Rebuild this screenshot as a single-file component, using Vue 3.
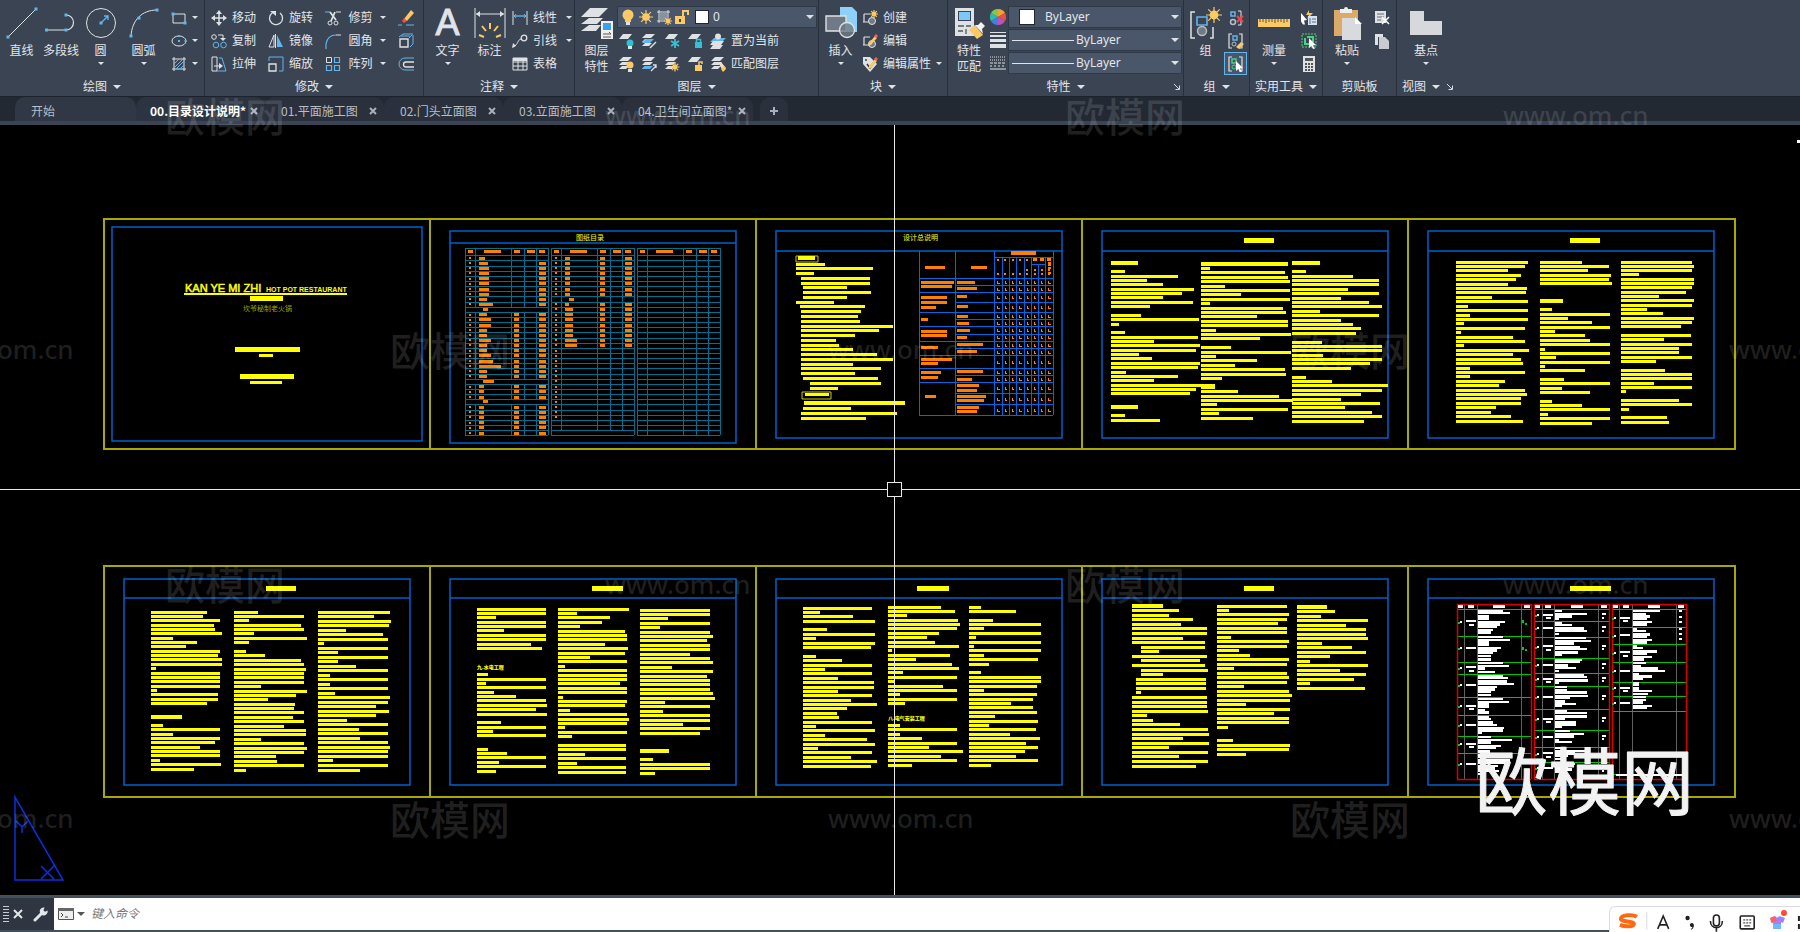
<template>
  <div class="app">
    <header class="ribbon">
      <section v-for="panel in panels" :key="panel.id" class="panel" :class="'panel-' + panel.id">
        <div class="panel-body">
          <button
            v-for="tool in panel.big"
            :key="tool.label"
            class="big"
            :class="{ wide: tool.label.length === 3 }"
          >
            <span v-if="tool.icon === 'A'" class="letter">A</span>
            <svg v-else class="icon-big" viewBox="0 0 32 32" v-html="icons[tool.icon]"></svg>
            <span class="big-label">{{ tool.label }}</span>
            <i v-if="tool.arrow" class="caret small"></i>
          </button>

          <div v-if="panel.id === 'layer'" class="layers">
            <div class="layer-box">
              <svg v-for="n in ['bulb', 'sun', 'vpfreeze', 'unlock']" :key="n" class="icon" viewBox="0 0 16 16" v-html="icons[n]"></svg>
              <i class="swatch"></i>
              <select class="pick" aria-label="图层"><option>0</option></select>
              <i class="caret"></i>
            </div>
            <div v-for="(row, r) in layerRows" :key="r" class="layer-row">
              <button v-for="n in row.icons" :key="n" class="tool" :aria-label="n">
                <svg class="icon" viewBox="0 0 16 16" v-html="icons[n]"></svg>
              </button>
              <button class="tool">
                <svg class="icon" viewBox="0 0 16 16" v-html="icons[row.icon]"></svg>{{ row.label }}
              </button>
            </div>
          </div>

          <div v-if="panel.id === 'props'" class="props">
            <div v-for="p in props" :key="p.icon" class="prop-row">
              <svg class="icon" viewBox="0 0 16 16" v-html="icons[p.icon]"></svg>
              <div class="prop-box">
                <i :class="p.line ? 'line' : 'swatch'"></i>
                <select class="pick" :aria-label="p.label"><option>ByLayer</option></select>
                <i class="caret"></i>
              </div>
            </div>
          </div>

          <div v-for="(col, c) in panel.cols" :key="c" class="col">
            <button
              v-for="tool in col"
              :key="tool.icon"
              class="tool"
              :class="{ on: tool.on }"
              :aria-label="tool.label || tool.icon"
            >
              <svg class="icon" viewBox="0 0 16 16" v-html="icons[tool.icon]"></svg>
              <span v-if="tool.label">{{ tool.label }}</span>
              <i v-if="tool.arrow" class="caret small"></i>
            </button>
          </div>
        </div>
        <div class="panel-title">
          {{ panel.title }}
          <i v-if="panel.id !== 'clip'" class="caret"></i>
          <svg v-if="panel.id === 'props' || panel.id === 'view'" class="launch" viewBox="0 0 8 8">
            <path d="M1 1l5 5M6.500 2.500v4h-4" fill="none" stroke="#d6dae0" />
          </svg>
        </div>
      </section>
    </header>

    <nav class="tabs">
      <button v-for="tab in tabs" :key="tab" class="tab" :class="{ home: tab === '开始', active: tab === activeTab }" @click="activeTab = tab">
        <span>{{ tab }}</span>
        <svg v-if="tab !== '开始'" class="cross" viewBox="0 0 8 8"><path d="M1 1l6 6M7 1l-6 6" /></svg>
      </button>
      <button class="tab add" aria-label="新建">
        <svg class="cross" viewBox="0 0 8 8"><path d="M4 0v8M0 4h8" /></svg>
      </button>
    </nav>

    <main class="model">
      <svg class="drawing" viewBox="0 125 1800 770" preserveAspectRatio="xMidYMid slice">
        <g fill="none" stroke="#a8a800" stroke-width="2">
          <path d="M104 219H1735V449H104zM430 219V449M756 219V449M1082 219V449M1408 219V449" />
          <path d="M104 566H1735V797H104zM430 566V797M756 566V797M1082 566V797M1408 566V797" />
        </g>
        <g fill="none" stroke="#0062cc" stroke-width="1.500">
          <path d="M112 227H422V441H112zM450 231H736V443H450zM450 243H736" />
          <path v-for="x in [776, 1102, 1428]" :key="x" :d="`M${x} 231h286v207h-286zM${x} 251h286`" />
          <path v-for="x in [124, 450, 776, 1102, 1428]" :key="'b' + x" :d="`M${x} 579h286v206h-286zM${x} 598h286`" />
        </g>

        <!-- 封面 -->
        <g class="yellow">
          <text x="185" y="292" class="cover-a">KAN YE MI ZHI</text>
          <text x="266" y="292" class="cover-b">HOT POT RESTAURANT</text>
          <text x="243" y="311" class="cover-c">坎爷秘制老火锅</text>
          <rect v-for="(b, i) in coverBars" :key="i" :x="b[0]" :y="b[1]" :width="b[2]" :height="b[3]" />
        </g>

        <!-- 图纸目录 -->
        <path :d="catalog.grid" fill="none" stroke="#007092" />
        <path :d="catalog.marks" fill="#ff8000" shape-rendering="crispEdges" />

        <!-- 设计总说明 -->
        <path :d="notes.grid" fill="none" stroke="#0068e0" />
        <path :d="notes.marks" fill="#ff8000" shape-rendering="crispEdges" />
        <path d="M796 256h22v6h-22zM802 392h29v7h-29z" fill="none" stroke="#c8c800" />

        <g class="yellow">
          <text x="576" y="240" class="sheet-title">图纸目录</text>
          <text x="903" y="240" class="sheet-title">设计总说明</text>
          <text x="477" y="669" class="chapter">九.水电工程</text>
          <text x="888" y="720" class="chapter">八.电气安装工程</text>
          <path :d="textLines" shape-rendering="crispEdges" />
        </g>

        <!-- 材料表 -->
        <path :d="schedule.grey" fill="none" stroke="#606060" />
        <path :d="schedule.green" fill="none" stroke="#00c400" />
        <path :d="schedule.red" fill="none" stroke="#d80000" stroke-width="1.500" />
        <path :d="schedule.white" fill="#fff" shape-rendering="crispEdges" />
        <path :d="schedule.dots" fill="#00c820" />

        <g fill="none" stroke="#0a30e0" stroke-width="1.500">
          <path d="M15 797V880H63zM16 821l6 6 6-6M22 827v6M41 866l13 13M54 866l-13 13" />
        </g>
        <path d="M894 125V482M894 496V895M0 489H887M901 489H1800M887 482h14v14h-14z" fill="none" stroke="#e8e8e8" shape-rendering="crispEdges" />
        <rect x="1797" y="140" width="3" height="3" fill="#fff" />
      </svg>
    </main>

    <footer class="command">
      <div class="command-side">
        <i class="grip"></i>
        <button aria-label="关闭"><svg class="side-x" viewBox="0 0 10 10"><path d="M1 1l8 8M9 1l-8 8" stroke="#e4e7ea" stroke-width="2" /></svg></button>
        <button aria-label="自定义">
          <svg class="wrench" viewBox="0 0 16 16">
            <path d="M2 14l6-6" stroke="#e4e7ea" stroke-width="3" stroke-linecap="round" />
            <path d="M14.600 4.500l-2.600 1.300-1.600-1.600L11.600 1.500A4 4 0 1 0 14.600 4.500z" fill="#e4e7ea" />
          </svg>
        </button>
      </div>
      <label class="prompt">
        <svg class="term" viewBox="0 0 16 12">
          <path d="M.5.5h15v11h-15z" fill="#eee" stroke="#555" /><path d="M0 0h16v3H0z" fill="#666" />
          <path d="M3 5l2 2-2 2M7 9h3" fill="none" stroke="#444" />
        </svg>
        <i class="caret dark"></i>
        <input type="text" placeholder="键入命令" aria-label="键入命令" />
      </label>
    </footer>

    <svg class="watermark" viewBox="0 0 1800 932" preserveAspectRatio="xMidYMid slice" aria-hidden="true">
      <text v-for="(m, i) in marks" :key="i" :x="m[0]" :y="m[1]" :class="m[2] ? 'mark-url' : 'mark-name'">{{ m[2] ? 'www.om.cn' : '欧模网' }}</text>
      <text x="1475" y="809" class="mark-big">欧模网</text>
    </svg>

    <div class="ime">
      <svg viewBox="0 0 191 25">
        <path d="M27 10c-4-3-16-2-16 2 0 3 13 2 13 5 0 3-9 3-14 1" fill="none" stroke="#ff6a10" stroke-width="4" />
        <path d="M37 5v18" stroke="#ddd" />
        <path d="M48 22l5.500-13 5.500 13M50 18h7" fill="none" stroke="#222" stroke-width="1.600" />
        <circle cx="78" cy="11" r="2.200" fill="#222" /><path d="M84 17a2 2 0 1 0-1 3l-2 3c3-1 4-4 3-6z" fill="#222" />
        <rect x="104" y="8" width="6" height="11" rx="3" fill="none" stroke="#222" stroke-width="1.600" />
        <path d="M101 14c0 9 12 9 12 0M107 21v4" fill="none" stroke="#222" stroke-width="1.600" />
        <rect x="131" y="9" width="14" height="13" rx="1" fill="none" stroke="#222" stroke-width="1.600" />
        <path d="M134 13h8M134 16h8" stroke="#222" stroke-dasharray="2 1" /><path d="M135 19h6" stroke="#222" />
        <path d="M161 11l5-2c1 2 3 2 4 0l6 2-2 5-2-1v7h-8v-7l-2 1z" fill="#a080ff" /><path d="M161 11l5-2 2 5-5 2z" fill="#ff6060" />
        <path d="M164 17h8v5h-8z" fill="#70b8ff" /><circle cx="175" cy="6" r="3" fill="#ff4a30" />
        <path d="M189 9h2v5h-2zM189 17h2v5h-2z" fill="#222" />
      </svg>
    </div>
  </div>
</template>

<script setup>
import { ref } from 'vue'

const tabs = ['开始', '00.目录设计说明*', '01.平面施工图', '02.门头立面图', '03.立面施工图', '04.卫生间立面图*']
const activeTab = ref('00.目录设计说明*')

const panels = [
  {
    id: 'draw', title: '绘图',
    big: [
      { label: '直线', icon: 'line' },
      { label: '多段线', icon: 'pline' },
      { label: '圆', icon: 'circle', arrow: true },
      { label: '圆弧', icon: 'arc', arrow: true }
    ],
    cols: [[{ icon: 'rect', arrow: true }, { icon: 'ellipse', arrow: true }, { icon: 'hatch', arrow: true }]]
  },
  {
    id: 'modify', title: '修改',
    cols: [
      [{ icon: 'move', label: '移动' }, { icon: 'copy', label: '复制' }, { icon: 'stretch', label: '拉伸' }],
      [{ icon: 'rotate', label: '旋转' }, { icon: 'mirror', label: '镜像' }, { icon: 'scale', label: '缩放' }],
      [{ icon: 'trim', label: '修剪', arrow: true }, { icon: 'fillet', label: '圆角', arrow: true }, { icon: 'array', label: '阵列', arrow: true }],
      [{ icon: 'erase' }, { icon: 'explode' }, { icon: 'offset' }]
    ]
  },
  {
    id: 'note', title: '注释',
    big: [{ label: '文字', icon: 'A', arrow: true }, { label: '标注', icon: 'dim' }],
    cols: [[{ icon: 'linear', label: '线性', arrow: true }, { icon: 'leader', label: '引线', arrow: true }, { icon: 'table', label: '表格' }]]
  },
  { id: 'layer', title: '图层', big: [{ label: '图层 特性', icon: 'layerprops' }] },
  {
    id: 'block', title: '块',
    big: [{ label: '插入', icon: 'insert', arrow: true }],
    cols: [[{ icon: 'create', label: '创建' }, { icon: 'edit', label: '编辑' }, { icon: 'attr', label: '编辑属性', arrow: true }]]
  },
  { id: 'props', title: '特性', big: [{ label: '特性 匹配', icon: 'match' }] },
  {
    id: 'group', title: '组',
    big: [{ label: '组', icon: 'group' }],
    cols: [[{ icon: 'ungroup' }, { icon: 'groupedit' }, { icon: 'grouppick', on: true }]]
  },
  {
    id: 'util', title: '实用工具',
    big: [{ label: '测量', icon: 'ruler', arrow: true }],
    cols: [[{ icon: 'quick' }, { icon: 'selectall' }, { icon: 'calc' }]]
  },
  {
    id: 'clip', title: '剪贴板',
    big: [{ label: '粘贴', icon: 'paste', arrow: true }],
    cols: [[{ icon: 'cut' }, { icon: 'pages' }]]
  },
  { id: 'view', title: '视图', big: [{ label: '基点', icon: 'base', arrow: true }] }
]

const layerRows = [
  { icons: ['lyoff', 'lyiso', 'lyfreeze', 'lylock'], icon: 'lycurrent', label: '置为当前' },
  { icons: ['lyon', 'lyuniso', 'lythaw', 'lyunlock'], icon: 'lymatch', label: '匹配图层' }
]

const props = [
  { icon: 'wheel', label: '颜色' },
  { icon: 'weight', label: '线宽', line: true },
  { icon: 'ltype', label: '线型', line: true }
]

const W = '#dfe2e5'
const B = '#62b5ea'
const Y = '#fbc965'
const G = '#4fd080'
const stroke = (d, c = W, w = 1) => `<path d="${d}" fill="none" stroke="${c}" stroke-width="${w}"/>`
const fill = (d, c = W) => `<path d="${d}" fill="${c}"/>`
const dots = (pts, s = 3) => pts.map(([x, y]) => `<rect x="${x - s / 2}" y="${y - s / 2}" width="${s}" height="${s}" fill="${B}"/>`).join('')
const sheets = fill('M5 1h9l-4 4H1z') + fill('M4 6h8l-3 3H1z') + fill('M4 10h7l-3 3H1z')
const oneSheet = fill('M5 1h9l-4 5H1z')
const padlock = (c, open) => fill('M8 9h7v6H8z', c) + stroke(open ? 'M12 9V6h3v2' : 'M9.500 9V6.500h4V9', c, 1.5)
const sunray = (x, y, r) => {
  let d = ''
  for (let i = 0; i < 8; i++) {
    const a = (i * Math.PI) / 4
    d += `M${x} ${y}L${(x + r * Math.cos(a)).toFixed(1)} ${(y + r * Math.sin(a)).toFixed(1)}`
  }
  return stroke(d, Y, 1.2) + `<circle cx="${x}" cy="${y}" r="${r * 0.55}" fill="${Y}"/>`
}
const pencil = fill('M7 10l6-7 2 2-6 7-3 1z', Y) + fill('M12 3l2-2 2 2-2 2z', '#f06060')
const blockBase = stroke('M2 4h6M2 4v8M1 12h6', W, 1.2) + '<circle cx="10" cy="11" r="3.500" fill="#707a86" stroke="#dfe2e5"/>'
const bracket = stroke('M4 1H1v14h3M11 1h3v14h-3', W, 1.2)
const cursor = fill('M8 5l7 7-3 .5 2 3-2 .5-1.500-3L8 15z', '#fff')

const icons = {
  line: stroke('M2 30L30 2') + dots([[2, 30], [30, 2]]),
  pline: stroke('M1 23h20a7 7 0 0 0 0-15', W, 1.2) + dots([[1.5, 23], [21, 23], [21, 8]]),
  circle: '<circle cx="16" cy="16" r="14.500" fill="none" stroke="#dfe2e5"/>' + stroke('M16 16l7-7M19 9h4v4', B, 1.3) + dots([[16, 16]]),
  arc: stroke('M3 29C4 13 14 3 29 3') + dots([[3, 29], [11, 11], [29, 3]]),
  rect: stroke('M2 4h12v9H2z') + dots([[2, 4], [14, 13]]),
  ellipse: '<ellipse cx="8" cy="8" rx="7" ry="5" fill="none" stroke="#dfe2e5"/>' + dots([[8, 8], [8, 3], [14.500, 8]], 2),
  hatch: stroke('M1 3h14M1 13h14M3 1v14M13 1v14') + stroke('M3 8l5-5M3 12l9-9M5 13l8-8M9 13l4-4', B),
  move: stroke('M8 2v12M2 8h12', W, 1.5) + fill('M8 0l3 4H5zM8 16l3-4H5zM0 8l4-3v6zM16 8l-4-3v6z'),
  copy: '<circle cx="3" cy="4" r="2.300" fill="none" stroke="#dfe2e5"/><circle cx="5" cy="12" r="2.800" fill="none" stroke="#62b5ea"/><circle cx="12.500" cy="12" r="2.800" fill="none" stroke="#62b5ea"/>' + stroke('M7 2h5v4') + fill('M9 5h6l-3 3z'),
  stretch: stroke('M6 1H1v14h5V1M3 10h7') + fill('M8 7l4 3-4 3z') + stroke('M8 2l3 0 4 13H6', B),
  rotate: stroke('M6 2a6.500 6.500 0 1 0 6 1', W, 1.3) + fill('M2 1h6v5z'),
  mirror: stroke('M6 2v12H1z') + fill('M9 2v12h6z', B) + stroke('M7.500 1v14', W),
  scale: stroke('M1 8h7v7H1z', W, 1.3) + stroke('M1 5V1h14v14h-4', B),
  trim: stroke('M0 2h5', B) + stroke('M11 2h5', W) + stroke('M5 2l6 8M10 2l-4 9', W, 1.8) + '<circle cx="5" cy="13" r="2" fill="none" stroke="#dfe2e5"/><circle cx="11" cy="13" r="2" fill="none" stroke="#dfe2e5"/>',
  fillet: stroke('M1 16v-5C2 5 6 2 11 2', B, 1.2) + stroke('M11 2h5'),
  array: stroke('M1.500 1.500h5v5h-5z') + stroke('M9.500 1.500h5v5h-5zM1.500 9.500h5v5h-5zM9.500 9.500h5v5h-5z', B, 1.2),
  erase: fill('M6 9l7-9 3 3-7 8z', Y) + fill('M4 11l2-3 3 3-3 2z', '#f05050') + stroke('M0 15h4', B) + stroke('M8 15h8', B),
  explode: stroke('M2 6h8v8H2z', W, 1.4) + stroke('M1 4l4-3h10M15 2v9l-3 3M11 5l3-3M3 3h9', B),
  offset: stroke('M16 2H7a6 6 0 0 0 0 12h9', B) + stroke('M16 6H8a2.500 2.500 0 0 0 0 5h8', W, 1.3),
  dim: stroke('M1 1v30M31 1v30M2 7h28') + fill('M2 7l4-3v6zM30 7l-4-3v6z') + stroke('M5 28l5 2M8 19l4 5M16 16v6M24 19l-4 5M27 28l-5 2', Y, 2),
  linear: stroke('M1 1v14M15 1v14') + stroke('M2 6h12', B, 1.4) + stroke('M2 6l2-2M2 6l2 2M14 6l-2-2M14 6l-2 2', B),
  leader: '<circle cx="12" cy="5" r="2.800" fill="none" stroke="#dfe2e5" stroke-width="1.300"/>' + stroke('M9 6c-4 1-2 5-8 8') + fill('M0 15l1-5 3 3z'),
  table: stroke('M1 2h14v12H1zM1 6h14M1 10h14M6 4v10M11 4v10') + fill('M1 2h14v3H1z'),
  layerprops: fill('M9 1h18l-9 9H0z') + fill('M8 11h14l-6 6H0z') + fill('M8 18h12l-5 6H0z') + fill('M20 14h12v18H20z', '#f0f0f0') + fill('M22 16h8v7h-8z', '#3aa0e8') + stroke('M22 27h8M22 30h8M28 25l2 2', '#555'),
  bulb: '<circle cx="8" cy="6" r="5.500" fill="#fbc965"/>' + fill('M5 9h6v4H5z', Y) + fill('M6 13h4v3H6z'),
  sun: sunray(8, 8, 7),
  vpfreeze: stroke('M1 3h13M1 12h8M3 1v13M12 1v7') + fill('M4 4h7v7H4z', '#8792a0') + sunray(12, 12, 4),
  unlock: fill('M1 7h10v8H1z', Y) + stroke('M9 7V2h5v4', Y, 2) + fill('M5 10h2v3H5z', '#444'),
  lyoff: oneSheet + '<circle cx="12" cy="10" r="3.500" fill="#30c0d0"/>' + fill('M10 13h4v3h-4z', '#c8f0f0'),
  lyiso: sheets + fill('M5 6h8l-4 4H1z', B) + stroke('M9 15l6-6', W, 1.4),
  lyfreeze: oneSheet + stroke('M11 6v9M7 8l8 5M15 8l-8 5', '#38c0d0', 1.8),
  lylock: oneSheet + padlock('#38c0d0'),
  lyon: sheets + '<circle cx="12" cy="9" r="3.500" fill="#fbc965"/>' + fill('M10 13h4v3h-4z'),
  lyuniso: sheets + fill('M4 10h8l-3 3H1z', B) + stroke('M10 15l5-5M12 9h3v3', W, 1.3),
  lythaw: sheets + sunray(11, 11, 4.500),
  lyunlock: oneSheet + padlock(Y, true),
  lycurrent: fill('M4 5h12l-4 4H0z', B) + fill('M3 8h11l-3 4H0zM3 12h10l-3 4H0z') + '<circle cx="8" cy="3.500" r="3" fill="#dfe2e5"/>',
  lymatch: sheets + fill('M9 8l2-2 5 6-3 3z', '#f0e0c0') + fill('M11 13l3-3 2 3-3 3z', Y),
  insert: fill('M15 0h12l5 5v20H15z', '#8fd0f8') + fill('M1 9h20v15H1z', '#707a86') + stroke('M1 9h20v15H1z', W, 1.4) + '<circle cx="22" cy="23" r="7.500" fill="#707a86" fill-opacity=".8" stroke="#dfe2e5" stroke-width="1.300"/>',
  create: blockBase + sunray(12, 4, 4),
  edit: blockBase + pencil,
  attr: fill('M1 1h7l7 7-7 8-7-8z') + '<circle cx="4" cy="4" r="1" fill="#3b4453"/>' + stroke('M5 8l3 4 5-7', '#333', 1.4) + pencil,
  match: fill('M2 1h19v28H2z') + fill('M5 4h13v10H5z', '#3b4453') + fill('M6 5h11v8H6z', '#7cc8f8') + stroke('M5 19h6M13 19h5M5 24h5M13 22v5', '#555', 1.300) + fill('M16 23l6-5 8 10-6 4z', Y) + fill('M22 18l3 0 3-3 4 4-3 3 1 5z', '#f4f4f4'),
  wheel: fill('M8 8V0a8 8 0 0 1 7 4z', '#f8a030') + fill('M8 8l7-4a8 8 0 0 1 0 8z', '#e85040') + fill('M8 8l7 4a8 8 0 0 1-7 4z', '#c050c0') + fill('M8 8v8a8 8 0 0 1-7-4z', '#4080e0') + fill('M8 8l-7 4a8 8 0 0 1 0-8z', '#30b8b0') + fill('M8 8L1 4a8 8 0 0 1 7-4z', '#80c850'),
  weight: fill('M0 0h16v1H0zM0 3h16v2H0zM0 7h16v3H0zM0 12h16v4H0z'),
  ltype: '<path d="M0 2h16M0 5h16" stroke="#dfe2e5" stroke-dasharray="1 1"/><path d="M0 8h16" stroke="#dfe2e5" stroke-dasharray="3 1"/><path d="M0 11h16" stroke="#dfe2e5" stroke-dasharray="2 2"/>' + stroke('M0 14h16'),
  group: stroke('M5 5H1v26h4M20 31h3V20', W, 1.5) + stroke('M7 10h10v8H7z', B, 1.6) + '<circle cx="12" cy="24" r="4.500" fill="#707a86" stroke="#b8bdc4" stroke-width="1.500"/>' + sunray(24, 8, 8),
  ungroup: stroke('M3 2h4v4H3z', B, 1.5) + '<circle cx="5" cy="12" r="2.500" fill="none" stroke="#b8bdc4" stroke-width="1.500"/>' + stroke('M10 1h3v14h-3') + stroke('M9 6l6 6M15 6l-6 6', '#f04848', 2),
  groupedit: bracket + stroke('M5 3h4v4H5z', B, 1.4) + '<circle cx="6" cy="11" r="2" fill="none" stroke="#b8bdc4"/>' + fill('M8 14l5-5 3 2-5 5z', Y),
  grouppick: bracket + stroke('M4 3h4v4H4z', G, 1.4) + '<circle cx="6" cy="11" r="2" fill="none" stroke="#4fd080"/>' + cursor,
  ruler: fill('M0 12h32v8H0z', Y) + stroke('M2 12v3M5 12v3M8 12v4M11 12v3M14 12v3M17 12v4M20 12v3M23 12v3M26 12v4M29 12v3', '#6a5020'),
  quick: fill('M0 3l6 7-3 .5 1 4-2 0-2-3z', '#fff') + fill('M8 0L5 5h3l-2 4 6-6H8z', Y) + fill('M7 6h9v9H7z') + stroke('M9 8v6M11 9h4M11 12h4', '#3070c0'),
  selectall: '<rect x="1" y="1" width="14" height="13" fill="none" stroke="#4fd080" stroke-dasharray="2 1"/>' + stroke('M4 5v6h6M6 4h6v5', G, 2) + cursor,
  calc: fill('M2 0h12v16H2z') + fill('M4 2h8v3H4z', '#555') + '<path d="M4 8h8M4 11h8M4 14h8" stroke="#555" stroke-width="2" stroke-dasharray="2 1"/>',
  paste: fill('M3 3h24v26H3z', '#dcaa68') + fill('M9 2h4a2 2 0 0 1 4 0h4v4H9z', '#eee') + fill('M11 11h13l6 6v16H11z', '#d8dade') + fill('M24 10v7h7z', '#fff'),
  cut: fill('M1 1h11v12H1z') + stroke('M3 4h7M3 7h7M3 10h4', '#666') + stroke('M8 7l7 7M15 7l-7 7', '#fff', 1.5),
  pages: fill('M1 1h8v11H1z') + fill('M5 4h6l4 4v8H5z', '#c8ccd2') + stroke('M4.500 4v11', '#3b4453'),
  base: fill('M0 4h14v10h18v14H0z', '#d6d8dc')
}

const coverBars = [[184, 293, 163, 2], [250, 296, 33, 5], [235, 347, 65, 5], [259, 354, 14, 3], [240, 374, 54, 5], [250, 381, 32, 3]]

// 文字行：每个数为行宽，h 为标题行，a+b 为缩进 a 后宽 b，- 为空行
const blocks = [
  [796, 264, 388, 0.333, '86 231 55 16+207 16+207 20+131 20+203 20+131 113 12+196 14+180 14+172 14+177 14+275 14+235 14+163 14+105 14+113 14+157 14+227 14+275 14+157 14+241 14+163 20+226 43+212 43+84'],
  [796, 403, 418, 0.333, '23+302h 20+143 16+288 16+195'],
  [1111, 263, 420, 0.421, '65h - 33 160 86 123 198 168 123 194 93 - 71 209 20 - 33 206 102 212 202 66 97 212 206 36 160 102 248 202 187 - - 65h - 33 116'],
  [1201, 264, 418, 0.421, '206h 21 200 206 211 56 211 95 211 21 195 201 133 206 206 36 213 140 - 71 213 36 133 80 200 201 50 - 34 87 186 218 38 206 43 124'],
  [1292, 263, 421, 0.421, '66h - 34 146 206 206 133 206 116 183 213 66 206 116 146 163 153 - 71 213 213 74 213 185 140 - 34 96 228 213 165 116 209 125 190 213 170'],
  [1456, 262, 421, 0.421, '172 163 124 154 143 124 168 166 85 172 29 172 34 172 18 164 11 135 164 18 174 135 154 158 34 165 34 117 103 165 168 154 154 95 82 130 158'],
  [1540, 262, 423, 0.421, '99 164 113 169 164 171 - - - 54h - 29 167 66 123 167 36 107 119 167 11 167 38 167 11 107 - 57 167 52 119 - 29 99 167 18 167 123'],
  [1621, 262, 422, 0.421, '168 173 168 42 173 173 168 155 90 173 168 61 100 173 168 143 - 166 102 168 138 138 168 83 - 105 168 168 78 168 12 - 138 168 18 - 109 113'],
  [151, 612, 769, 0.427, '132 121 162 147 151 166 51 107 83 162 156 166 166 11 162 162 162 162 15 156 156 132 - - 72h - 27 162 51 162 151 114 162 162 21 165 101'],
  [234, 612, 770, 0.427, '56 163 34 158 163 47 170 34 - 29 73 158 163 168 163 163 163 63 170 146 80 144 140 163 138 163 117 168 168 63 163 170 163 99 101 163 29'],
  [318, 612, 770, 0.427, '169 131 172 167 65 152 165 13 165 47 165 47 90 165 29 165 29 165 40 169 165 135 167 135 67 165 95 165 99 165 169 165 165 36 165 99'],
  [477, 609, 771, 0.427, '162 162 45 162 162 63 162 162 126 152 - - - - - 26 162 22 162 40 92 162 165 138 165 - 57 162 38 162 - - 26 70 162 51 162 45'],
  [558, 609, 772, 0.427, '167 45 122 103 52 157 162 162 110 164 157 76 162 16 162 162 162 145 162 162 11 162 156 27 162 167 162 16 162 33 - 160 160 63 160 45 160 160'],
  [640, 610, 773, 0.427, '165 165 66 165 47 165 170 158 165 165 117 165 170 76 170 158 165 165 165 170 176 59 165 54 165 165 100 165 141 - - - 68h - 30 163 163 36'],
  [803, 608, 766, 0.421, '165 41 119 171 - 57 171 30 171 161 - 30 92 165 53 165 82 168 168 82 165 113 175 105 80 85 165 30 171 53 151 171 35 165 113 175 161'],
  [888, 607, 765, 0.421, '125 159 46 166 171 164 120 93 111 169 10 148 67 152 169 36 164 15 130 164 28 164 40 - - - - 28 164 28 81 164 97 177 127 164 58'],
  [969, 607, 765, 0.421, '29 112 - 56 171 36 171 17 171 11 171 36 165 48 - 29 171 171 162 36 162 151 100 151 162 62 165 48 158 98 169 136 165 132 112 165 53'],
  [1132, 606, 766, 0.421, '73h 111 89 145 116 179 179 121 174 21+153 21+43 179 21+140 174 21+158 21+52 9+167 9+167 9+167 9+13 179 179 179 181 36 50 114 181 183 121 183 89 181 111 181 152'],
  [1217, 606, 754, 0.421, '167 29 172 167 145 167 167 34 172 167 52 78 172 167 40 167 170 167 64 172 177 174 68 174 135 170 170 27 - - 37 174 172 68'],
  [1297, 607, 688, 0.421, '72h 91 57 169 116 164 164 169 59 130 164 79 31 169 101 164 136 31 162']
]

const box = (x, y, w, h) => `M${Math.round(x)} ${Math.round(y)}h${Math.max(1, Math.round(w))}v${Math.round(h)}h${-Math.max(1, Math.round(w))}z`

function setLines([x, top, bottom, unit, text]) {
  const rows = text.split(' ')
  const pitch = (bottom - top) / (rows.length - 1)
  return rows.map((row, i) => {
    if (row === '-') return ''
    const head = row.endsWith('h')
    const parts = row.replace('h', '').split('+').map(Number)
    const indent = parts.length > 1 ? parts[0] : 0
    const h = head ? 4 : 3
    return box(x + indent * unit, top + i * pitch - h / 2, parts[parts.length - 1] * unit, h)
  }).join('')
}

const titleBars = [[1244, 238, 30], [1570, 238, 30], [266, 586, 30], [592, 586, 31], [917, 586, 32], [1244, 586, 30], [1570, 586, 41]]
const textLines = blocks.map(setLines).join('') +
  titleBars.map(([x, y, w]) => box(x, y, w, 5)).join('') + box(798, 256, 17, 4) + box(805, 393, 24, 3)

// 表格以三分之一图形单位绘制
const pen = (ox, oy) => ({
  h: (x1, x2, y) => `M${Math.round(ox + x1 / 3)} ${Math.round(oy + y / 3) + 0.5}H${Math.round(ox + x2 / 3)}`,
  v: (x, y1, y2) => `M${Math.round(ox + x / 3) + 0.5} ${Math.round(oy + y1 / 3)}V${Math.round(oy + y2 / 3)}`,
  bar: (x1, x2, y, h = 8) => box(ox + x1 / 3, oy + (y - h / 2) / 3, (x2 - x1) / 3, h / 3)
})

function drawCatalog() {
  const p = pen(430, 210)
  const rowY = i => 136 + i * 15.43
  const merged = [10, 24, 28]
  let grid = ''
  let marks = ''
  for (const dx of [0, 258, 516]) {
    for (let i = -1; i <= 35; i++) grid += p.h(106 + dx, 355 + dx, i < 0 ? 114 : rowY(i))
    for (const x of [106, 355]) grid += p.v(x + dx, 114, 676)
    for (const x of [135, 244, 282, 319]) {
      if (dx) grid += p.v(x + dx, 114, dx === 258 ? 660 : 676)
      else [[114, rowY(10)], [rowY(11), rowY(24)], [rowY(25), rowY(28)], [rowY(29), 676]].forEach(([a, b]) => { grid += p.v(x, a, b) })
    }
    for (const [a, b] of [[114, 128], [163, 213], [253, 272], [290, 313], [326, 345]]) marks += p.bar(a + dx, b + dx, 124)
  }
  const names = [19, 28, 31, 31, 31, 31, 31, 31, 25, 42, 0, 25, 37, 37, 25, 25, 37, 25, 25, 37, 43, 67, 25, 25, 0, 16, 16, 16, 0, 16, 16, 16, 16, 16, 16]
  names.forEach((w, i) => {
    const y = rowY(i) + 8
    if (merged.includes(i)) {
      marks += p.bar(160, i === 24 ? 192 : 174, y, 10)
      return
    }
    marks += p.bar(117, 123, y, 6) + p.bar(146, 146 + w, y)
    if (i > 0) marks += p.bar(328, 348, y)
    if (i > 10) marks += p.bar(252, 267, y)
  })
  for (let i = 0; i < 32; i++) {
    const y = rowY(i) + 8
    if (i === 8) {
      marks += p.bar(418, 432, y)
      continue
    }
    marks += p.bar(375, 381, y, 6)
    if (i < 18) marks += p.bar(404, i < 8 ? 420 : i === 9 ? 415 : i < 16 ? 429 : 441, y) + p.bar(511, 525, y) + p.bar(585, 606, y)
  }
  return { grid, marks }
}

function drawNotes() {
  const p = pen(755, 210)
  const rows = [205, 226, 247, 277, 307, 328, 349, 371, 394, 415, 436, 475, 496, 517, 550, 583, 616]
  const cols = [718, 740, 761, 784, 806, 828, 849, 871, 893]
  let grid = p.h(718, 893, 142) + p.h(828, 871, 163) + p.v(492, 122, 616) + p.v(599, 122, 616) + p.v(718, 122, 142)
  for (const y of [205, 247, 307, 349, 394, 436, 475, 517, 616]) grid += p.h(492, 599, y)
  for (const y of rows) grid += p.h(599, 893, y)
  for (const x of cols) grid += p.v(x, x === 849 ? 163 : 142, 616)
  grid += p.v(893, 122, 142)
  const bars = [
    [511, 571, 172], [647, 696, 172], [498, 597, 216], [498, 591, 230], [498, 577, 262], [498, 577, 276], [498, 543, 291],
    [498, 518, 328], [498, 577, 363], [498, 577, 375], [498, 548, 412], [498, 591, 447], [498, 548, 459], [498, 557, 488],
    [498, 548, 502], [511, 545, 558], [606, 661, 216], [606, 667, 236], [606, 635, 259], [606, 638, 288], [606, 638, 318],
    [606, 641, 340], [606, 644, 361], [606, 635, 381], [606, 684, 404], [606, 667, 424], [606, 684, 485], [606, 650, 508],
    [606, 673, 526], [606, 667, 540], [606, 693, 558], [606, 687, 572], [606, 673, 592], [606, 667, 604]
  ]
  let marks = p.bar(768, 842, 129, 12) + bars.map(b => p.bar(...b)).join('')
  for (let c = 0; c < 8; c++) {
    const x = (cols[c] + cols[c + 1]) / 2
    for (let r = 0; r < 16; r++) {
      const y = (rows[r] + rows[r + 1]) / 2
      marks += p.bar(x - 2, x + 1, y + 1, 9) + p.bar(x - 1, x + 5, y + 4, 4)
    }
    marks += c < 5 ? p.bar(x - 3, x + 3, 150, 6) : p.bar(x - 5, x + 6, 149)
    marks += p.bar(x - 3, x + 3, 193, 6)
    if (c > 3) marks += p.bar(x - 3, x + 3, 180, 6)
    if (c === 7) for (const y of [158, 165, 172, 187]) marks += p.bar(x - 4, x + 5, y, 5)
  }
  return { grid, marks }
}

function drawSchedule() {
  const p = pen(1400, 560)
  const green = [
    [148, 228, 307, 343, 412, 466, 529, 580],
    [148, 184, 230, 295, 340, 378, 447, 511, 560, 606],
    [148, 202, 253, 305, 365, 409, 454, 643]
  ]
  const text = [
    [[152, '76 96 33 33 81 65 58 45 38'], [231, '76 96 33 33 70 58 45 38 38'], [310, '76 93 22 50'], [347, '76 90 86 107 58 50 38 38'], [417, '76 93 33 33 22 33'], [470, '33 40 45 58 78 74 12'], [532, '40 102 38 70 55 35'], [584, '100 90 96 80 60 50 62 20']],
    [[153, '22 95 52 12'], [188, '22 50 86 95 12'], [235, '92 107 58 76 96 70 20'], [299, '80 76 40 63 12'], [344, '86 95 100 12'], [382, '35 35 95 98 45 30 64 20'], [452, '35 95 97 30 64 64 20'], [514, '45 86 58 12 52'], [564, '30 90 60 40 20'], [612, '60 40 50 30']],
    [[153, '82 38 52 43 58 43'], [206, '12 40 52 43 58 43'], [257, '12 30 72 43 58 32'], [309, '40 25 76 96 18 58 30'], [368, '18 18 18 58 45'], [412, '38 38 30 58 43']]
  ]
  const out = { grey: '', green: '', red: '', white: p.bar(648, 855, 645, 7), dots: '' }
  text.forEach((groups, b) => {
    const dx = b * 232
    out.red += p.h(171 + dx, 394 + dx, 132) + p.h(171 + dx, 394 + dx, 656) + p.v(171 + dx, 132, 656) + p.v(394 + dx, 132, 656)
    for (const x of [193, 231, 363]) out.grey += p.v(x + dx, 132, 656)
    for (const y of green[b]) out.green += p.h(171 + dx, 394 + dx, y)
    for (const [a, c] of [[174, 190], [204, 222], [280, 315], [371, 388]]) out.white += p.bar(a + dx, c + dx, 140)
    groups.forEach(([y, s], g) => {
      const rows = s.split(' ')
      rows.forEach((w, i) => { out.white += p.bar(234 + dx, 234 + dx + Number(w), y + i * 8.2, i % 3 === 2 ? 8 : 6) })
      const mid = y + rows.length * 4
      out.white += p.bar(197 + dx, 228 + dx, mid - 4, 6) + p.bar(179 + dx, 184 + dx, mid - 4, 5)
      if (g % 2 === 0) out.white += p.bar(206 + dx, 220 + dx, mid + 5, 5)
      if (b === 1) out.white += p.bar(373 + dx, 384 + dx, mid - 6, 6) + p.bar(375 + dx, 382 + dx, mid + 4, 6)
      if (b === 0 && g < 2) out.dots += p.bar(367, 374, mid - 3, 8) + p.bar(374, 381, mid + 2, 5)
      out.dots += p.bar(173 + dx, 179 + dx, mid, 6)
    })
  })
  for (const y of [154, 170, 186, 206, 222, 238]) out.white += p.bar(837, 846, y, 6)
  return out
}

const catalog = drawCatalog()
const notes = drawNotes()
const schedule = drawSchedule()

const marks = [
  [165, 132, 0], [1065, 132, 0], [390, 366, 0], [1290, 366, 0], [165, 600, 0], [1065, 600, 0], [390, 835, 0], [1290, 835, 0],
  [605, 125, 1], [1503, 125, 1], [-72, 359, 1], [828, 359, 1], [1729, 359, 1],
  [605, 594, 1], [1503, 594, 1], [-72, 828, 1], [828, 828, 1], [1729, 828, 1]
]
</script>

<style>
body {
  margin: 0;
  background: #000;
}
</style>

<style scoped>
.app {
  position: relative;
  display: flex;
  flex-direction: column;
  height: 100vh;
  overflow: hidden;
  background: #000;
  color: #e2e5e9;
  font: 12px/16px 'Noto Sans', 'Noto Sans CJK SC', sans-serif;
}

button {
  display: flex;
  align-items: center;
  padding: 0;
  border: 0;
  background: none;
  color: inherit;
  font: inherit;
  white-space: nowrap;
  cursor: pointer;
}

.ribbon {
  display: flex;
  flex: none;
  height: 96px;
  border-bottom: 1px solid #1d232c;
  background: #3b4453;
}

.panel {
  display: flex;
  flex: none;
  flex-direction: column;
  box-sizing: border-box;
  border-right: 1px solid #28303c;
}

.panel-draw { width: 205px; }
.panel-modify { width: 219px; }
.panel-note { width: 151px; }
.panel-layer { width: 244px; }
.panel-block { width: 129px; }
.panel-props { width: 236px; }
.panel-group { width: 66px; }
.panel-util { width: 73px; }
.panel-clip { width: 74px; }
.panel-view { flex: 1; border: 0; }

.panel-body {
  display: flex;
  flex: none;
  box-sizing: border-box;
  height: 79px;
  padding-top: 1px;
}

.panel-title {
  display: flex;
  align-items: center;
  justify-content: center;
  gap: 6px;
  height: 16px;
}

.panel-view .panel-title {
  justify-content: flex-start;
  padding-left: 5px;
}

.launch {
  width: 8px;
  height: 8px;
}

.panel-props .panel-title {
  position: relative;
}

.panel-props .launch {
  position: absolute;
  right: 2px;
}

.caret {
  flex: none;
  border: 4px solid transparent;
  border-top-color: #dfe2e5;
  border-bottom: 0;
}

.caret.small {
  border-width: 3px;
  border-bottom: 0;
}

.caret.dark {
  border-top-color: #555;
}

.big {
  flex: none;
  flex-direction: column;
  width: 43px;
  padding-top: 5px;
}

.big.wide {
  width: 36px;
}

.icon-big,
.letter {
  flex: none;
  width: 32px;
  height: 34px;
  overflow: visible;
}

.letter {
  font: 36px/34px 'Liberation Sans', sans-serif;
  -webkit-text-stroke: 1px #dfe2e5;
}

.big-label {
  padding: 3px 0;
}

.panel-layer .big-label,
.panel-props .big-label {
  width: 24px;
  white-space: normal;
}

.col {
  display: flex;
  flex: none;
  flex-direction: column;
  padding-top: 5px;
  padding-left: 6px;
}

.tool {
  gap: 5px;
  height: 23px;
}

.icon {
  flex: none;
  width: 16px;
  height: 16px;
}

.panel-modify .col {
  width: 51px;
}

.panel-modify .col:nth-child(3) {
  width: 67px;
}

.panel-modify .col:nth-child(3) .tool {
  justify-content: space-between;
  width: 61px;
}

.panel-modify .col:nth-child(4) {
  width: 16px;
}

.panel-note .tool .caret {
  margin-left: 4px;
}

.panel-note .big {
  width: 37px;
}

.panel-note .big:first-child {
  width: 47px;
}

.panel-note .col {
  padding-left: 4px;
}

.panel-block .col {
  padding-left: 0;
}

.panel-props .big {
  width: 42px;
}

.panel-group .col {
  padding-left: 0;
  margin-left: -3px;
}

.panel-util .col,
.panel-clip .col {
  padding-left: 3px;
}

.panel-util .big,
.panel-clip .big {
  width: 48px;
}

.panel-view .big {
  width: 58px;
}

.panel-group .tool {
  box-sizing: border-box;
  justify-content: center;
  width: 23px;
}

.tool.on {
  border: 1px solid #62b5ea;
  background: #46566b;
}

.layers,
.props {
  flex: 1;
  padding-top: 6px;
}

.layer-box,
.prop-box {
  display: flex;
  align-items: center;
  box-sizing: border-box;
  height: 20px;
  padding-right: 2px;
  background: #4a5669;
  outline: 1px solid #303947;
}

.layer-box {
  gap: 2px;
  padding-left: 2px;
  margin-right: 2px;
}

.layer-row {
  display: flex;
  gap: 7px;
}

.layer-row:nth-child(2) {
  padding-top: 2px;
}

.swatch {
  flex: none;
  width: 12px;
  height: 12px;
  margin-left: 3px;
  border: 1px solid #20262f;
  background: #fff;
}

.pick {
  flex: 1;
  min-width: 0;
  padding: 0 2px;
  border: 0;
  background: none;
  color: inherit;
  font: inherit;
  appearance: none;
}

.props {
  display: flex;
  flex-direction: column;
  gap: 3px;
}

.prop-row {
  display: flex;
  align-items: center;
  gap: 3px;
}

.prop-box {
  flex: 1;
  margin-right: 2px;
}

.prop-box .swatch {
  width: 14px;
  height: 14px;
  margin: 0 8px 0 10px;
}

.line {
  flex: none;
  width: 62px;
  height: 1px;
  margin-left: 3px;
  background: #e2e5e9;
}

.prop-box .line + .pick {
  padding: 0 2px;
}

.tabs {
  display: flex;
  flex: none;
  height: 24px;
  padding-left: 15px;
  border-bottom: 4px solid #3b4453;
  background: #222933;
}

.tab {
  justify-content: space-between;
  box-sizing: border-box;
  width: 119px;
  padding: 3px 7px 0 16px;
  border-radius: 10px 10px 0 0;
  background: #2a313d;
  color: #b9bec6;
  font-family: 'Noto Sans CJK SC', sans-serif;
}

.tab.home {
  width: 121px;
  background: #303846;
}

.tab.active {
  width: 129px;
  padding-left: 14px;
  background: #2c3441;
  color: #fff;
  font-weight: 700;
}

.tab:nth-last-child(2) {
  width: 131px;
}

.tab.add {
  justify-content: center;
  width: 28px;
  padding: 3px 0 0;
  margin-left: 7px;
}

.cross {
  flex: none;
  width: 8px;
  height: 8px;
  fill: none;
  stroke: #aab0b8;
  stroke-width: 2;
}

.model {
  flex: 1;
  min-height: 0;
}

.drawing {
  display: block;
  width: 100%;
  height: 100%;
}

.yellow {
  fill: #ff0;
}

.cover-a {
  font: 11px 'Liberation Sans', sans-serif;
  stroke: #ff0;
  stroke-width: 0.500px;
}

.cover-b {
  font: 700 7px 'Liberation Sans', sans-serif;
}

.cover-c {
  font: 7px 'Noto Sans CJK SC', sans-serif;
  fill: #a0a000;
}

.sheet-title {
  font: 7px 'Noto Sans CJK SC', sans-serif;
}

.chapter {
  font: 900 5px 'Noto Sans CJK SC', sans-serif;
}

.command {
  display: flex;
  flex: none;
  box-sizing: border-box;
  height: 37px;
  border-top: 3px solid #454f5c;
  border-bottom: 2px solid #454f5c;
  background: #2f3642;
}

.command-side {
  display: flex;
  flex: none;
  align-items: center;
  gap: 4px;
  width: 51px;
  padding-left: 3px;
}

.grip {
  width: 6px;
  height: 16px;
  background: repeating-linear-gradient(#c8ccd2 0 1px, transparent 1px 3px);
}

.side-x {
  width: 10px;
  height: 10px;
}

.wrench {
  width: 16px;
  height: 16px;
  margin-left: 6px;
}

.prompt {
  display: flex;
  flex: 1;
  align-items: center;
  gap: 3px;
  padding-left: 4px;
  background: #fff;
}

.term {
  width: 16px;
  height: 12px;
}

.prompt input {
  flex: 1;
  padding: 0 3px;
  border: 0;
  outline: 0;
  font: italic 12px/16px 'Noto Sans', 'Noto Sans CJK SC', sans-serif;
}

.prompt input::placeholder {
  color: #777;
}

.watermark {
  position: absolute;
  inset: 0;
  width: 100%;
  height: 100%;
  pointer-events: none;
}

.mark-name {
  font: 500 40px 'Noto Sans CJK SC', sans-serif;
  fill: #fff;
  fill-opacity: 0.13;
}

.mark-url {
  font: 500 26px 'Noto Sans', sans-serif;
  fill: #fff;
  fill-opacity: 0.13;
}

.mark-big {
  font: 73px 'Noto Sans CJK SC', sans-serif;
  fill: #f2f2f2;
  stroke: #f2f2f2;
  stroke-linejoin: round;
}

.ime {
  position: absolute;
  right: 0;
  bottom: 0;
  width: 190px;
  height: 25px;
  border: 1px solid #ddd;
  border-width: 1px 0 0 1px;
  border-radius: 6px 0 0;
  background: #fff;
}
</style>
